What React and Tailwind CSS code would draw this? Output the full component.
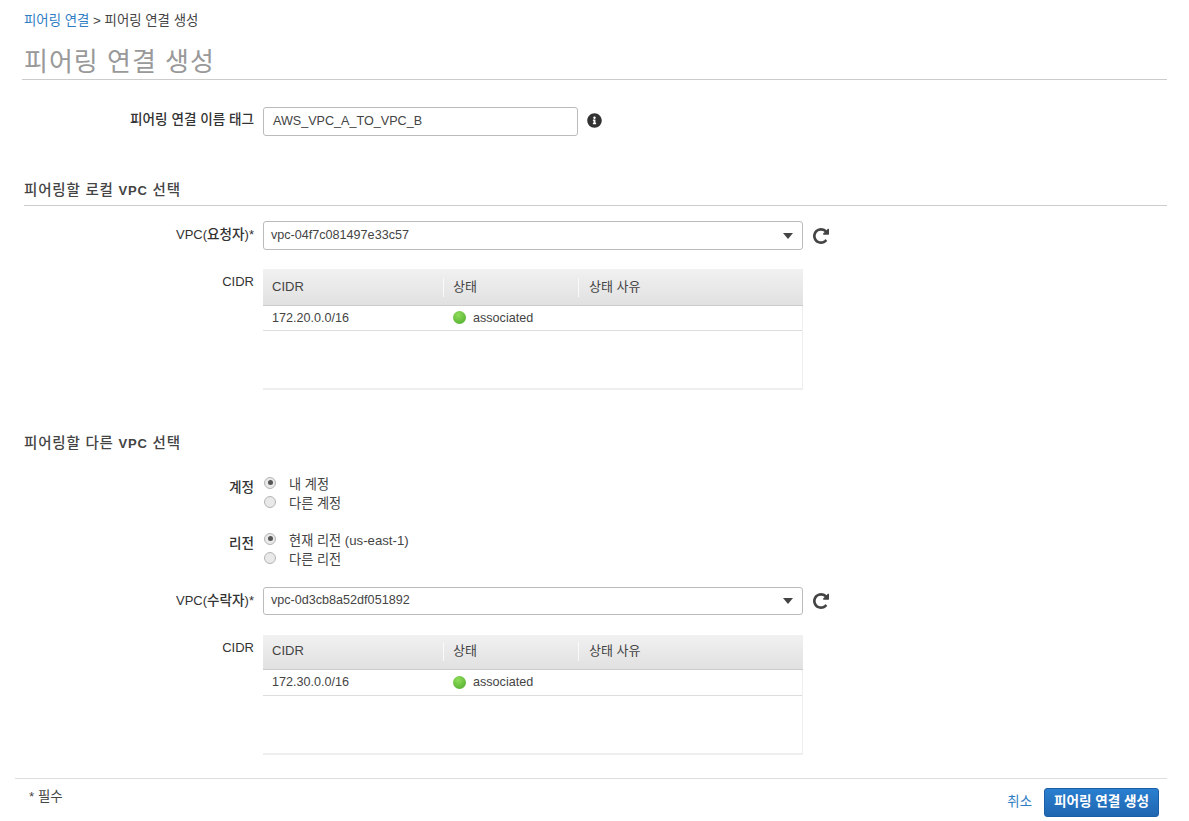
import React from 'react';
import { FaInfoCircle } from 'react-icons/fa';

// fa-repeat, the glyph the console uses; react-icons only has the newer redo
function RefreshIcon() {
  return (
    <svg viewBox="0 0 1536 1536" width="16" height="16" className="ml-[10px] text-[#444444]" fill="currentColor">
      <path
        transform="matrix(1 0 0 -1 0 1408)"
        d="M1536 1280v-448q0 -26 -19 -45t-45 -19h-448q-42 0 -59 40q-17 39 14 69l138 138q-148 137 -349 137q-104 0 -198.5 -40.5t-163.5 -109.5t-109.5 -163.5t-40.5 -198.5t40.5 -198.5t109.5 -163.5t163.5 -109.5t198.5 -40.5q119 0 225 52t179 147q7 10 23 12q14 0 25 -9l137 -138q9 -8 9.5 -20.5t-7.5 -22.5q-109 -132 -264 -204.5t-327 -72.5q-156 0 -298 61t-245 164t-164 245t-61 298t61 298t164 245t245 164t298 61q147 0 284.5 -55.5t244.5 -156.5l130 129q29 31 70 14q39 -17 39 -59z"
      />
    </svg>
  );
}

function CidrTable({ cidr, tableHeight, headClass, rowHeight }) {
  return (
    <div className={`w-[540px] ${tableHeight} flex flex-col border-r border-b-2 border-[#eeeeee]`}>
      <div className={`${headClass} flex items-center border-b border-[#cccccc] bg-gradient-to-b from-[#f1f1f1] to-[#e1e1e1] text-[13px] text-[#444444] -mr-px`}>
        <div className="w-[180px] pl-[9px]">CIDR</div>
        <div className="w-[135px] pl-[9px] border-l border-[#fafafa] h-[19px] leading-[17px]">상태</div>
        <div className="flex-1 pl-[10px] border-l border-[#fafafa] h-[19px] leading-[17px]">상태 사유</div>
      </div>
      <div className={`${rowHeight} flex items-center border-b border-[#dddddd] text-[12.6px] text-[#444444]`}>
        <div className="w-[180px] pl-[9px]">{cidr}</div>
        <div className="flex items-center pl-[10px]">
          <span className="w-[13px] h-[13px] rounded-full bg-[radial-gradient(circle_at_40%_30%,#8fdc5a,#4aa82a)] mr-[7px]" />
          associated
        </div>
      </div>
    </div>
  );
}

function FieldLabel({ children, className = '' }) {
  return (
    <div className={`w-[230px] shrink-0 text-right text-[13.6px] font-medium text-[#333333] ${className}`}>
      {children}
    </div>
  );
}

function VpcLabel({ who }) {
  return (
    <FieldLabel>
      <span className="text-[13px]">VPC(</span>{who}<span className="text-[13px]">)*</span>
    </FieldLabel>
  );
}

function VpcSelect({ value, heightClass }) {
  return (
    <div className="flex items-center">
      <div className={`w-[540px] ${heightClass} flex items-center justify-between rounded-[3px] border border-[#bbbbbb] pl-[7px] pr-[9px] text-[12.6px] text-[#444444]`}>
        <span className="-mt-[1px]">{value}</span>
        <span className="w-0 h-0 border-x-[5px] border-x-transparent border-t-[6px] border-t-[#444444]" />
      </div>
      <RefreshIcon />
    </div>
  );
}

function Radio({ checked, label }) {
  return (
    <label className="h-[19px] flex items-center text-[13.2px] text-[#444444]">
      <span className="ml-[1px] w-[12px] h-[12px] rounded-full border border-[#b5b5b5] bg-[#e9e9e9] flex items-center justify-center -mt-[4px]">
        {checked && <span className="w-[5px] h-[5px] rounded-full bg-[#555555]" />}
      </span>
      <span className="ml-[13px]">{label}</span>
    </label>
  );
}

function SectionTitle({ before, after, className }) {
  return (
    <h2 className={`text-[14.5px] tracking-[0.8px] font-medium leading-[18px] text-[#444444] ${className}`}>
      {before} <span className="font-bold text-[13px]">VPC</span> {after}
    </h2>
  );
}

export default function App() {
  return (
    <div className="w-[1189px] h-[821px] overflow-hidden bg-white font-['Liberation_Sans','Noto_Sans_CJK_KR',sans-serif]">
      <div className="pl-[24px] pr-[22px]">
        <div className="pt-[14px] h-[27px] text-[13.4px] leading-[14px] text-[#444444]">
          <span className="text-[#2f7ec4]">피어링 연결</span> &gt; 피어링 연결 생성
        </div>
        <h1 className="-ml-[2px] pl-[2px] mt-[17px] h-[36px] border-b border-[#cccccc] text-[26px] leading-[37px] tracking-[1px] text-[#999999]">
          피어링 연결 생성
        </h1>

        <div className="mt-[27px] flex items-center">
          <FieldLabel className="-mt-[2px]">피어링 연결 이름 태그</FieldLabel>
          <div className="ml-[9px] w-[315px] h-[29px] flex items-center rounded-[3px] border border-[#bbbbbb] pl-[9px] pb-[1px] text-[12.6px] text-[#444444]">
            AWS_VPC_A_TO_VPC_B
          </div>
          <FaInfoCircle size={15} className="ml-[9px] -mt-[2px] text-[#333333]" />
        </div>

        <SectionTitle before="피어링할 로컬" after="선택" className="mt-[45px] h-[25px] border-b border-[#cccccc]" />
        <div className="mt-[15px] flex items-center">
          <VpcLabel who="요청자" />
          <div className="ml-[9px]"><VpcSelect value="vpc-04f7c081497e33c57" heightClass="h-[29px]" /></div>
        </div>
        <div className="mt-[19px] flex">
          <FieldLabel className="pt-[3px] text-[13px]">CIDR</FieldLabel>
          <div className="ml-[9px]"><CidrTable cidr="172.20.0.0/16" tableHeight="h-[121px]" headClass="h-[37px]" rowHeight="h-[25px]" /></div>
        </div>

        <SectionTitle before="피어링할 다른" after="선택" className="mt-[44px] h-[18px]" />
        <div className="mt-[23px] flex">
          <FieldLabel className="pt-[3px]">계정</FieldLabel>
          <div className="ml-[9px] flex flex-col">
            <Radio checked label="내 계정" />
            <Radio label="다른 계정" />
          </div>
        </div>
        <div className="mt-[18px] flex">
          <FieldLabel className="pt-[3px]">리전</FieldLabel>
          <div className="ml-[9px] flex flex-col">
            <Radio checked label="현재 리전 (us-east-1)" />
            <Radio label="다른 리전" />
          </div>
        </div>
        <div className="mt-[18px] flex items-center">
          <VpcLabel who="수락자" />
          <div className="ml-[9px]"><VpcSelect value="vpc-0d3cb8a52df051892" heightClass="h-[28px]" /></div>
        </div>
        <div className="mt-[20px] flex">
          <FieldLabel className="pt-[3px] text-[13px]">CIDR</FieldLabel>
          <div className="ml-[9px]"><CidrTable cidr="172.30.0.0/16" tableHeight="h-[120px]" headClass="h-[35px] pb-[2px]" rowHeight="h-[26px]" /></div>
        </div>
      </div>

      <div className="ml-[15px] mr-[22px] mt-[23px] border-t border-[#dddddd] flex justify-between">
        <div className="pl-[14px] pt-[8px] text-[13.4px] text-[#444444]">* 필수</div>
        <div className="flex items-center pt-[9px] pr-[8px]">
          <span className="text-[13.4px] text-[#2f7ec4]">취소</span>
          <button className="ml-[12px] w-[115px] h-[29px] rounded-[3px] border border-[#1b5ea8] bg-gradient-to-b from-[#2a7fd0] to-[#1f66b0] text-[13.6px] font-bold text-white">
            피어링 연결 생성
          </button>
        </div>
      </div>
    </div>
  );
}
